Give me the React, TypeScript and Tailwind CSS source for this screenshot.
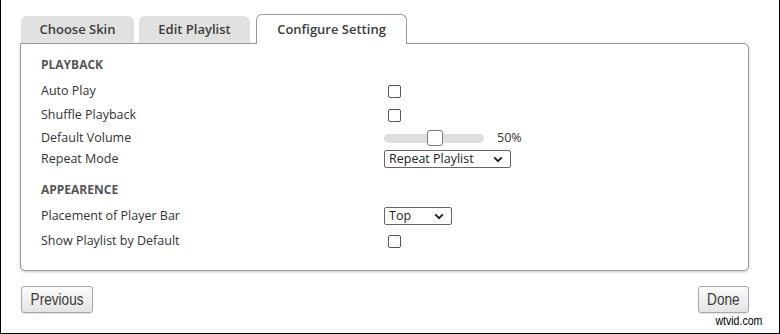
const sans = "font-['Open_Sans','Noto_Sans',sans-serif]"
const narrow = "font-['Liberation_Sans','Arial',sans-serif]"

function Checkbox() {
  return <span className="ml-[4px] block h-[13px] w-[13px] rounded-[2px] border border-[#555] bg-white" />
}

function Chevron() {
  return (
    <svg width="10" height="7" viewBox="0 0 10 7" aria-hidden="true">
      <path d="M1.2 1.3 5 5.1 8.8 1.3" fill="none" stroke="#222" strokeWidth="1.9" />
    </svg>
  )
}

function Select({ value, width }: { value: string; width: string }) {
  return (
    <div className={`flex h-[18px] items-center justify-between rounded-[2px] border border-[#666] bg-white pl-[4px] pr-[7px] text-[12.5px] text-[#222] ${width}`}>
      <span>{value}</span>
      <Chevron />
    </div>
  )
}

function Row({ label, mt, children }: { label: string; mt: string; children: React.ReactNode }) {
  return (
    <div className={`flex h-[20px] items-center ${mt}`}>
      <span className="w-[343px] text-[12.5px] text-[#333]">{label}</span>
      {children}
    </div>
  )
}

function Button({ label, width }: { label: string; width: string }) {
  return (
    <button
      className={`${narrow} flex h-[27px] items-center justify-center rounded-[3px] border border-[#a8a8a8] bg-[linear-gradient(#fbfbfb,#e4e4e4)] text-[17px] text-[#3a3a3a] shadow-[0_1px_1px_rgba(0,0,0,0.12)] ${width}`}
    >
      <span className="inline-block scale-x-[0.8]">{label}</span>
    </button>
  )
}

export default function App() {
  return (
    <div className={`${sans} relative h-[334px] w-[780px] border-x border-b border-black bg-white`}>
      <div className="ml-[19px] w-[729px] pt-[14px]">
        <div className="flex items-end gap-[5px] pl-[1px]">
          <div className="flex h-[27px] w-[113px] items-center justify-center rounded-t-[6px] bg-[#e1e1e1] text-[13px] font-semibold text-[#3c3c3c]">
            Choose Skin
          </div>
          <div className="flex h-[27px] w-[111px] items-center justify-center rounded-t-[6px] bg-[#e1e1e1] text-[13px] font-semibold text-[#3c3c3c]">
            Edit Playlist
          </div>
          <div className="relative z-10 -mb-px ml-[1px] flex h-[30px] w-[151px] items-center justify-center rounded-t-[6px] border border-b-0 border-[#9a9a9a] bg-white text-[13px] font-semibold text-[#3c3c3c]">
            Configure Setting
          </div>
        </div>
        <div className="h-[228px] rounded-[5px] rounded-tl-none border border-[#9a9a9a] bg-white pl-[20px] pt-[11px] shadow-[0_1px_3px_rgba(0,0,0,0.22)]">
          <div className="flex h-[20px] items-center text-[12px] font-bold text-[#555]">PLAYBACK</div>
          <Row label="Auto Play" mt="mt-[6px]">
            <Checkbox />
          </Row>
          <Row label="Shuffle Playback" mt="mt-[4px]">
            <Checkbox />
          </Row>
          <Row label="Default Volume" mt="mt-[3px]">
            <div className="flex items-center">
              <div className="relative h-[9px] w-[100px] rounded-full bg-[#dedede]">
                <span className="absolute left-[43px] top-[-4px] h-[16px] w-[16px] rounded-[3px] border border-[#7a7a7a] bg-white" />
              </div>
              <span className="ml-[13px] text-[12.5px] text-[#333]">50%</span>
            </div>
          </Row>
          <Row label="Repeat Mode" mt="mt-[1px]">
            <Select value="Repeat Playlist" width="w-[127px]" />
          </Row>
          <div className="mt-[11px] flex h-[20px] items-center text-[12px] font-bold text-[#555]">APPEARENCE</div>
          <Row label="Placement of Player Bar" mt="mt-[6px]">
            <Select value="Top" width="w-[68px]" />
          </Row>
          <Row label="Show Playlist by Default" mt="mt-[5px]">
            <Checkbox />
          </Row>
        </div>
        <div className="mt-[15px] flex justify-between pl-[1px]">
          <Button label="Previous" width="w-[72px]" />
          <Button label="Done" width="w-[51px]" />
        </div>
      </div>
      <span className={`${narrow} absolute bottom-[3px] right-[17px] inline-block origin-right scale-x-[0.88] text-[12px] text-black`}>wtvid.com</span>
    </div>
  )
}
